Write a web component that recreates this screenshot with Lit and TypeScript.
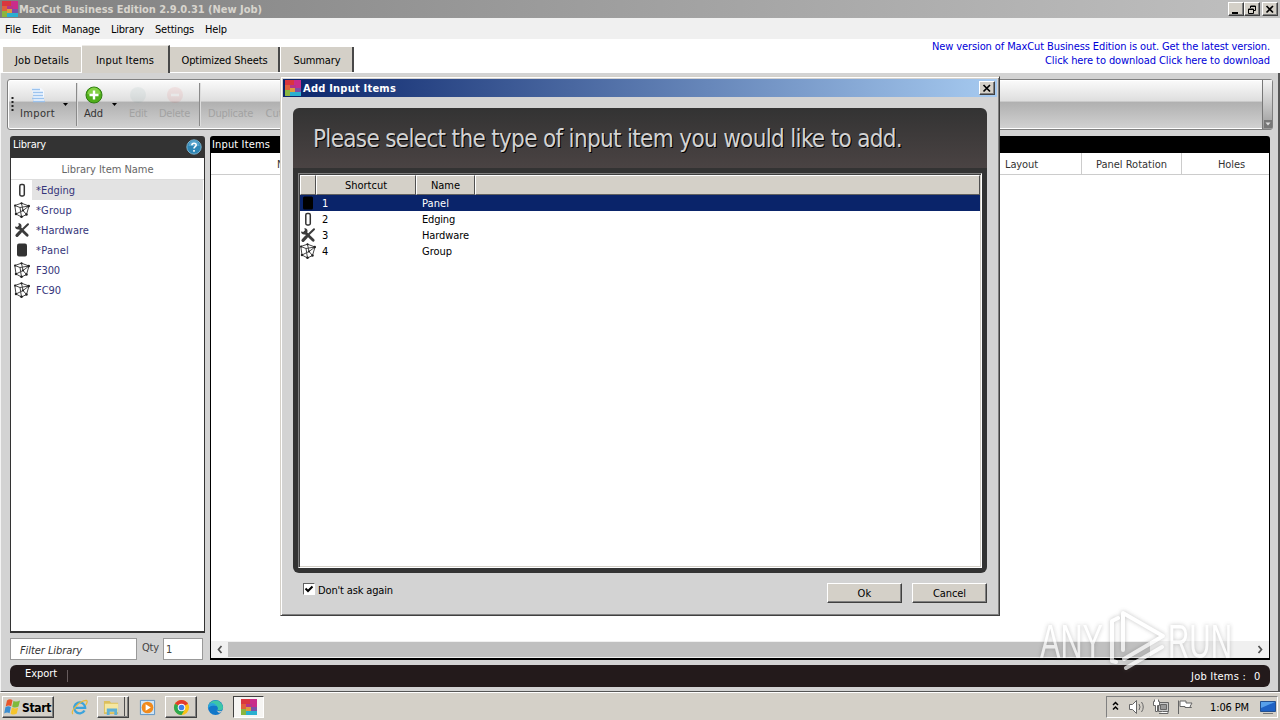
import { LitElement, html, svg, css } from "lit";
import { customElement, property } from "lit/decorators.js";
import { classMap } from "lit/directives/class-map.js";

// Label whose tracking is adjusted so that the run takes `fit` pixels.
@customElement("fit-label")
export class FitLabel extends LitElement {
  @property({ type: String }) text = "";
  @property({ type: Number }) fit = 0;

  static styles = css`
    :host {
      display: inline-block;
      white-space: pre;
      flex: none;
      padding-top: 2px;
    }
  `;

  render() {
    return html`<span>${this.text}</span>`;
  }

  updated() {
    const span = this.renderRoot.querySelector("span") as HTMLElement;
    span.style.letterSpacing = "0";
    const natural = span.getBoundingClientRect().width;
    const gap = (this.fit - natural) / Math.max(1, this.text.length);
    span.style.letterSpacing = `${gap.toFixed(3)}px`;
  }
}

const t = (text: string, fit: number) =>
  html`<fit-label text=${text} fit=${fit}></fit-label>`;

const logo = html`<svg class="logo" viewBox="0 0 16 16">
  <path fill="#d9363f" d="M0 0h9v5H0z" />
  <path fill="#c92c8a" d="M9 0h7v9h-5V5H9z" />
  <path fill="#e0603c" d="M0 5h5v5H0z" />
  <path fill="#8bb53f" d="M0 10h5v6H0z" />
  <path fill="#b4348c" d="M5 5h6v3H5z" />
  <path fill="#e09a3c" d="M5 8h5v4H5z" />
  <path fill="#7b4fa8" d="M10 8h6v4h-6z" />
  <path fill="#2bb0d0" d="M5 12h11v4H5z" />
</svg>`;

const glyphs: Record<string, unknown> = {
  edging: svg`<rect x="5.8" y="2.500" width="4.500" height="11.500" rx="1.400" fill="#fff" stroke="#333" stroke-width="1.500"/>`,
  panel: svg`<rect x="3" y="1.500" width="10" height="13" rx="2" fill="#333"/>`,
  solid: svg`<rect x="3" y="1.500" width="10" height="13" rx="1.500" fill="#000"/>`,
  group: svg`<path d="M0.800 3.500 7.500 1.200 15 4 12.500 12.500 7.500 15 2 12ZM0.800 3.500 6 5.500 15 4M6 5.500 7.500 15M2 12 9 8.500 15 4M9 8.500 12.500 12.500M7.500 1.200 9 8.500" fill="none" stroke="#444" stroke-width="1"/>
    <g fill="#222"><circle cx="1.100" cy="3.500" r="1.100"/><circle cx="7.500" cy="1.300" r="1.100"/><circle cx="14.700" cy="4" r="1.300"/><circle cx="12.500" cy="12.500" r="1.200"/><circle cx="7.500" cy="14.700" r="1.300"/><circle cx="2" cy="12" r="1.200"/><circle cx="9" cy="8.500" r="1"/></g>`,
  hardware: svg`<path d="M5 5.200 13.200 13.200" stroke="#3c3c3c" stroke-width="2.800" stroke-linecap="round"/>
    <path d="M1 4.500 3.500 5 4.900 3.600 4.400 1.100C7 1.200 8.200 3.500 7.200 5.600L5.500 7.200C3.500 8.200 1 6.800 1 4.500Z" fill="#3c3c3c"/>
    <path d="M14 2.200 8.300 7.800" stroke="#3c3c3c" stroke-width="2" stroke-linecap="round"/>
    <path d="M6.500 9.700 3 13.300" stroke="#3c3c3c" stroke-width="3.200" stroke-linecap="round"/>`,
};

const glyph = (name: string) =>
  html`<svg class="glyph" viewBox="0 0 16 16">${glyphs[name]}</svg>`;

const closeMark = html`<svg viewBox="0 0 10 9" width="10" height="9">
  <path d="M1.500 1 8 7.500M8 1 1.500 7.500" stroke="#000" stroke-width="1.700" />
</svg>`;

const arrow = html`<svg class="tri" viewBox="0 0 5 3">
  <path d="M0 0h5L2.500 3z" />
</svg>`;

const menu: [string, number][] = [
  ["File", 16],
  ["Edit", 19],
  ["Manage", 38],
  ["Library", 33],
  ["Settings", 39],
  ["Help", 22],
];

const library: [string, string, number][] = [
  ["edging", "*Edging", 39],
  ["group", "*Group", 36],
  ["hardware", "*Hardware", 53],
  ["panel", "*Panel", 33],
  ["group", "F300", 24],
  ["group", "FC90", 25],
];

const choices: [string, string, string, number][] = [
  ["solid", "1", "Panel", 27],
  ["edging", "2", "Edging", 33],
  ["hardware", "3", "Hardware", 47],
  ["group", "4", "Group", 30],
];

@customElement("app-root")
export class AppRoot extends LitElement {
  static styles = css`
    * {
      box-sizing: border-box;
    }
    :host {
      display: flex;
      flex-direction: column;
      position: relative;
      width: 1280px;
      height: 720px;
      overflow: hidden;
      background: #d3d3d3;
      color: #000;
      font: 11px/14px "DejaVu Sans Condensed", "DejaVu Sans", sans-serif;
    }
    svg {
      display: block;
      flex: none;
    }
    .logo,
    .glyph {
      width: 16px;
      height: 16px;
    }
    .grow {
      flex: 1;
    }

    .titlebar {
      height: 18px;
      flex: none;
      display: flex;
      align-items: center;
      padding: 0 2px;
      gap: 1px;
      background: linear-gradient(90deg, #808080, #c0c0c0);
      color: #d8d5ce;
      font-weight: bold;
    }
    .winbtns {
      display: flex;
    }
    .winbtn {
      width: 16px;
      height: 14px;
      display: flex;
      align-items: center;
      justify-content: center;
      background: #d4d0c8;
      border: 1px solid;
      border-color: #fff #404040 #404040 #fff;
      box-shadow: inset -1px -1px #808080;
    }
    .winbtn.last {
      margin-left: 2px;
    }

    .menubar {
      height: 21px;
      flex: none;
      display: flex;
      align-items: center;
      gap: 11px;
      padding-left: 5px;
      background: #f0f0f0;
    }
    .strip {
      height: 34px;
      flex: none;
      display: flex;
      align-items: flex-end;
      padding: 0 10px 0 3px;
      background: #fff;
    }
    .tab {
      height: 25px;
      margin-bottom: 1px;
      display: flex;
      align-items: center;
      justify-content: center;
      background: #d4d0c8;
      border-right: 2px solid #484848;
    }
    .tab.job {
      width: 78px;
      border-right: 0;
      margin-right: 1px;
    }
    .tab.input {
      width: 88px;
      height: 28px;
      margin-bottom: 0;
      padding-top: 1px;
      border-top: 1px solid #eceae6;
    }
    .tab.sheets {
      width: 110px;
      padding-left: 1px;
      margin-right: 1px;
    }
    .tab.summary {
      width: 73px;
      padding-left: 1px;
    }
    .notice {
      height: 34px;
      display: flex;
      flex-direction: column;
      align-items: flex-end;
      color: #0000d8;
      line-height: 12px;
    }

    .workspace {
      height: 619px;
      flex: none;
      display: flex;
      flex-direction: column;
      padding: 6px 5px 3px 6px;
      border-right: 2px solid #555;
      border-bottom: 1px solid #555;
      border-left: 1px solid #f4f4f4;
    }
    .toolbar {
      height: 51px;
      flex: none;
      display: flex;
      border: 1px solid #808080;
      border-radius: 3px;
      box-shadow: inset 0 0 0 1px #fff;
      background: linear-gradient(#fbfbfb, #dedede 43%, #b0b0b0 45%, #d2d2d2);
      color: #333;
    }
    .tool {
      display: flex;
      flex-direction: column;
      align-items: center;
      padding-top: 6px;
      gap: 1px;
      height: 49px;
    }
    .tool svg,
    .tool .blank {
      width: 18px;
      height: 18px;
    }
    .tool.off {
      color: #a2a2a2;
    }
    .tool.off svg {
      opacity: 0.08;
    }
    .tool.delete {
      margin: 0 9px 0 12px;
    }
    .tool.duplicate {
      margin: 0 12px 0 7px;
    }
    .grip {
      width: 12px;
      padding: 16px 0 0 3px;
    }
    .tri {
      width: 5px;
      height: 3px;
      margin: 23px 8px 0;
    }
    .tool.add {
      margin-left: 6px;
    }
    .tool.add + .tri {
      margin: 23px 12px 0 9px;
    }
    .rule {
      width: 2px;
      height: 43px;
      margin-top: 3px;
      border-left: 1px solid #8a8a8a;
      border-right: 1px solid #ddd;
    }
    .end {
      width: 10px;
      height: 49px;
      display: flex;
      align-items: flex-end;
      justify-content: center;
      padding-bottom: 1px;
      border-left: 1px solid #777;
      background: linear-gradient(#f4f4f4, #999);
    }
    .end svg {
      width: 8px;
      height: 8px;
    }

    .panes {
      display: flex;
      gap: 5px;
      height: 524px;
      flex: none;
      margin: 6px 3px 0;
    }
    .side {
      width: 195px;
      display: flex;
      flex-direction: column;
    }
    .library {
      height: 497px;
      background: #fff;
      border: 1px solid #333;
      border-bottom-width: 2px;
      border-radius: 3px 3px 0 0;
    }
    .library .head {
      height: 21px;
      display: flex;
      justify-content: space-between;
      padding: 0 2px;
      background: #333;
      color: #fff;
      line-height: 12px;
    }
    .help {
      width: 16px;
      height: 16px;
      margin-top: 2px;
    }
    .library .colhead {
      height: 22px;
      display: flex;
      align-items: center;
      justify-content: center;
      border-bottom: 1px solid #ddd;
      color: #666;
    }
    .item {
      height: 20px;
      display: flex;
      align-items: center;
      padding-left: 3px;
      gap: 2px;
      color: #35357a;
    }
    .item .name {
      flex: 1;
      height: 20px;
      display: flex;
      align-items: center;
      padding-left: 4px;
      margin-right: 1px;
    }
    .item .name.on {
      background: #e3e3e3;
    }
    .filter {
      display: flex;
      height: 22px;
      margin-top: 5px;
      color: #444;
    }
    .box {
      height: 22px;
      display: flex;
      align-items: center;
      border: 1px solid #999;
      background: #fff;
      padding-left: 2px;
    }
    .box.search {
      width: 127px;
      padding: 1px 0 0 9px;
      font-style: italic;
      color: #333;
    }
    .box.qty {
      width: 40px;
      margin-left: 4px;
    }
    .qtylabel {
      width: 17px;
      margin-left: 5px;
      padding-top: 1px;
    }

    .grid {
      flex: 1;
      display: flex;
      flex-direction: column;
      background: #fff;
      border: 1px solid #000;
      border-bottom-width: 2px;
      border-radius: 3px 3px 0 0;
    }
    .grid .head {
      height: 16px;
      padding: 0 1px;
      background: #000;
      color: #fff;
      line-height: 12px;
    }
    .cols {
      height: 22px;
      display: flex;
      border-bottom: 1px solid #ccc;
      color: #333;
    }
    .col {
      display: flex;
      align-items: center;
      justify-content: center;
      border-right: 1px solid #ccc;
    }
    .col.name {
      width: 750px;
      justify-content: flex-start;
      padding-left: 66px;
      border: 0;
    }
    .col.layout {
      width: 121px;
      padding-left: 1px;
    }
    .col.rotation {
      width: 100px;
    }
    .col.holes {
      flex: 1;
      padding-left: 12px;
      border: 0;
    }
    .scroll {
      height: 17px;
      display: flex;
      align-items: center;
      background: #f0f0f0;
    }
    .scroll svg {
      width: 17px;
      height: 17px;
    }
    .thumb {
      width: 922px;
      height: 15px;
      margin-right: auto;
      background: #c0c0c0;
    }
    .status {
      height: 22px;
      flex: none;
      margin: 5px 3px 0;
      display: flex;
      padding: 0 10px 0 15px;
      border-radius: 6px;
      background: #231a1b;
      color: #fff;
    }
    .status .pipe {
      width: 1px;
      height: 12px;
      margin: 5px 0 0 10px;
      background: #665c5d;
    }
    .status .count {
      display: flex;
      gap: 8px;
      padding-top: 3px;
    }

    .taskbar {
      height: 28px;
      flex: none;
      display: flex;
      padding: 3px 2px 2px;
      border-top: 1px solid #fff;
      background: #d4d0c8;
    }
    .start {
      width: 52px;
      height: 22px;
      display: flex;
      align-items: center;
      gap: 1px;
      padding: 0 0 1px 1px;
      border: 1px solid;
      border-color: #fff #404040 #404040 #fff;
      box-shadow: inset -1px -1px #808080;
      font-size: 12px;
      font-weight: bold;
    }
    .slot {
      width: 32px;
      height: 22px;
      display: flex;
      align-items: center;
      justify-content: center;
      border: 1px solid transparent;
    }
    .slot svg {
      width: 17px;
      height: 17px;
    }
    .slot.up {
      border-color: #fff #404040 #404040 #fff;
      box-shadow: inset -1px -1px #808080;
    }
    .slot.stack {
      padding-right: 4px;
      box-shadow: inset -1px -1px #808080, inset -3px 0 #d4d0c8,
        inset -4px 0 #505050;
    }
    .slot.down {
      width: 31px;
      border-color: #404040 #fff #fff #404040;
      background: #f6f5f3;
    }
    .slot.down svg {
      width: 16px;
      height: 16px;
    }
    .quick {
      display: flex;
      margin-left: 9px;
      gap: 2px;
    }
    .tray {
      width: 172px;
      height: 22px;
      display: flex;
      align-items: center;
      padding-left: 4px;
      border: 1px solid;
      border-color: #808080 #fff #fff #808080;
    }
    .tray .time {
      margin: 0 10px 0 15px;
    }

    .dialog {
      position: absolute;
      left: 280px;
      top: 76px;
      width: 720px;
      height: 540px;
      display: flex;
      flex-direction: column;
      padding: 1px;
      border: 1px solid;
      border-color: #d4d0c8 #404040 #404040 #d4d0c8;
      box-shadow: inset 1px 1px #fff, inset -1px -1px #808080;
      background: #d3d3d3;
    }
    .caption {
      height: 18px;
      margin: 1px 1px 0;
      flex: none;
      display: flex;
      align-items: center;
      gap: 2px;
      padding: 0 2px;
      background: linear-gradient(90deg, #0a246a, #a6caf0);
      color: #fff;
      font-weight: bold;
    }
    .frame {
      height: 465px;
      margin: 11px 11px 0;
      padding: 0 5px 5px;
      flex: none;
      display: flex;
      flex-direction: column;
      border-radius: 6px;
      background: linear-gradient(#333, #4a4343 60px, #333 60px);
    }
    .prompt {
      height: 65px;
      flex: none;
      padding: 14px 15px;
      color: #d3d3d3;
      font-size: 24px;
      line-height: 30px;
      text-shadow: 1px 1px #000;
    }
    .list {
      flex: 1;
      border: 1px solid;
      border-color: #808080 #fff #fff #808080;
      box-shadow: inset 1px 1px #404040, inset -1px -1px #d4d0c8;
      padding: 1px;
      background: #fff;
    }
    .heads {
      height: 20px;
      display: flex;
    }
    .heads div {
      height: 20px;
      display: flex;
      align-items: center;
      justify-content: center;
      background: #d4d0c8;
      border: 1px solid;
      border-color: #fff #505050 #606060 #fff;
    }
    .heads .h1 {
      width: 16px;
    }
    .heads .h2 {
      width: 100px;
    }
    .heads .h3 {
      width: 59px;
    }
    .heads .h4 {
      flex: 1;
    }
    .choice {
      height: 16px;
      display: flex;
      align-items: center;
    }
    .choice.on {
      background: #0a246a;
      color: #fff;
    }
    .choice .key {
      width: 100px;
      margin-left: 6px;
    }
    .actions {
      display: flex;
      padding: 10px 11px 0 21px;
      gap: 10px;
    }
    .check {
      display: flex;
      flex: 1;
      gap: 3px;
      margin-top: -1px;
    }
    .tick {
      width: 12px;
      height: 12px;
      margin-top: 1px;
      border: 1px solid;
      border-color: #606060 #fff #fff #606060;
      background: #fff;
    }
    .push {
      width: 75px;
      height: 20px;
      display: flex;
      align-items: center;
      justify-content: center;
      background: #d4d0c8;
      border: 1px solid;
      border-color: #fff #404040 #404040 #fff;
      box-shadow: inset -1px -1px #808080;
    }

    .watermark {
      position: absolute;
      left: 1030px;
      top: 590px;
      overflow: visible;
      filter: drop-shadow(0 0 2px rgba(90, 90, 90, 0.5));
      opacity: 0.7;
      font-family: "Liberation Sans", sans-serif;
    }
  `;

  private windowBar() {
    return html`<div class="titlebar">
      ${logo}${t("MaxCut Business Edition 2.9.0.31 (New Job)", 243)}
      <span class="grow"></span>
      <div class="winbtns">
        <div class="winbtn">
          <svg viewBox="0 0 10 9" width="10" height="9"><path d="M1 7h6v2H1z" /></svg>
        </div>
        <div class="winbtn">
          <svg viewBox="0 0 10 9" width="10" height="9">
            <path d="M3.500 3V1h5v4.500H7M3.500 1.500h5M1.500 4h5v4.500h-5zM1.500 4.500h5" fill="none" stroke="#000" />
          </svg>
        </div>
        <div class="winbtn last">${closeMark}</div>
      </div>
    </div>`;
  }

  private toolbar() {
    return html`<div class="toolbar">
      <div class="grip">
        <svg width="3" height="16">
          <path d="M1.500 1v15" stroke="#222" stroke-width="2" stroke-dasharray="2 2" />
        </svg>
      </div>
      <div class="tool">
        <svg viewBox="0 0 18 18">
          <path d="M3 2h9l3 3v11H5z" fill="#f3f8ff" />
          <path d="M3 3.500h8M4 6.500h10M4 9.500h10M3 12.500h12M4 15.500h12" stroke="#9cc3ee" stroke-width="1.300" />
        </svg>
        ${t("Import", 35)}
      </div>
      ${arrow}
      <div class="rule"></div>
      <div class="tool add">
        <svg viewBox="0 0 18 18">
          <circle cx="9" cy="9" r="8" fill="#4fae1a" stroke="#2f7d12" />
          <path d="M2.500 8a6.500 6.500 0 0 1 13 0q-6.500 2-13 0z" fill="#9ade55" opacity="0.700" />
          <path d="M9 4.500v9M4.500 9h9" stroke="#fff" stroke-width="2.400" />
        </svg>
        ${t("Add", 19)}
      </div>
      ${arrow}
      <div class="tool off edit">
        <svg viewBox="0 0 18 18"><circle cx="9" cy="9" r="8" fill="#5a8a8a" /></svg>
        ${t("Edit", 18)}
      </div>
      <div class="tool off delete">
        <svg viewBox="0 0 18 18">
          <circle cx="9" cy="9" r="8" fill="#d33" />
          <path d="M5 9h8" stroke="#fff" stroke-width="2.500" />
        </svg>
        ${t("Delete", 31)}
      </div>
      <div class="rule"></div>
      <div class="tool off duplicate">
        <span class="blank"></span>${t("Duplicate", 45)}
      </div>
      <div class="tool off"><span class="blank"></span>${t("Cut", 17)}</div>
      <span class="grow"></span>
      <div class="end">
        <svg viewBox="0 0 8 8">
          <path d="M0 0h8v8H0z" fill="#777" />
          <path d="M1.500 2.500h5L4 5.500z" fill="#ddd" />
        </svg>
      </div>
    </div>`;
  }

  private side() {
    return html`<div class="side">
      <div class="library">
        <div class="head">
          ${t("Library", 33)}
          <svg class="help" viewBox="0 0 16 16">
            <circle cx="8" cy="8" r="7.200" fill="#2f86b5" stroke="#8ec6e2" stroke-width="0.800" />
            <path d="M2.500 7a5.500 5.500 0 0 1 11 0z" fill="#69b0d6" opacity="0.700" />
            <path d="M5.900 6.200C5.900 3.600 10.200 3.700 10.200 6.100 10.200 7.800 8 7.700 8 9.600M8 11v1.700" fill="none" stroke="#fff" stroke-width="1.600" />
          </svg>
        </div>
        <div class="colhead">${t("Library Item Name", 92)}</div>
        ${library.map(
          ([icon, name, w], i) => html`<div class="item">
            ${glyph(icon)}
            <div class=${classMap({ name: true, on: i === 0 })}>${t(name, w)}</div>
          </div>`
        )}
      </div>
      <div class="filter">
        <div class="box search">${t("Filter Library", 62)}</div>
        <div class="qtylabel">${t("Qty", 17)}</div>
        <div class="box qty">${t("1", 6)}</div>
      </div>
    </div>`;
  }

  private grid() {
    return html`<div class="grid">
      <div class="head">${t("Input Items", 58)}</div>
      <div class="cols">
        <div class="col name">${t("Name", 28)}</div>
        <div class="col layout">${t("Layout", 33)}</div>
        <div class="col rotation">${t("Panel Rotation", 71)}</div>
        <div class="col holes">${t("Holes", 27)}</div>
      </div>
      <div class="grow"></div>
      <div class="scroll">
        <svg viewBox="0 0 17 17">
          <path d="M10.500 5 7.500 8.500 10.500 12" fill="none" stroke="#505050" stroke-width="1.700" />
        </svg>
        <div class="thumb"></div>
        <svg viewBox="0 0 17 17">
          <path d="M6.500 5 9.500 8.500 6.500 12" fill="none" stroke="#505050" stroke-width="1.700" />
        </svg>
      </div>
    </div>`;
  }

  private taskbar() {
    return html`<div class="taskbar">
      <div class="start">
        <svg viewBox="0 0 17 17" width="17" height="17">
          <path d="M3 2.500Q6 0 8.500 2.200L7.200 8.200Q4.500 6.500 1.700 8.500z" fill="#e8562a" />
          <path d="M9.500 2.700Q12.500 4.500 16 2.500L14.500 8.500Q11.500 10.500 8.200 8.700z" fill="#7fba3c" />
          <path d="M1.400 9.300Q4.200 7.400 6.900 9.100L5.600 15.200Q3 13.500.2 15.500z" fill="#3c8ed0" />
          <path d="M7.900 9.600Q11 11.300 14.200 9.400L12.800 15.600Q9.500 17.500 6.600 15.700z" fill="#f6c52c" />
        </svg>
        ${t("Start", 29)}
      </div>
      <div class="quick">
        <div class="slot">
          <svg viewBox="0 0 18 18">
            <path d="M14.300 12.200A5.800 5.800 0 1 1 15 9.400H5" fill="none" stroke="#3ba3dc" stroke-width="2.500" />
            <path d="M2 16C-1 13 9 2 16 1.500c2 .3 1 3-.5 5" fill="none" stroke="#e9b93a" stroke-width="1.300" />
          </svg>
        </div>
        <div class="slot up stack">
          <svg viewBox="0 0 18 18">
            <path d="M1 2h6l1.500 2H16v12H1z" fill="#dcbf5c" />
            <path d="M2 5h14v9H2z" fill="#f5e7a0" />
            <path d="M4 17v-7h11v7h-3v-3.500H7V17z" fill="#5fb0d6" />
          </svg>
        </div>
        <div class="slot">
          <svg viewBox="0 0 18 18">
            <path d="M1.500 1.500h15v15h-15z" fill="#cfe4f5" stroke="#5b93c4" />
            <circle cx="9" cy="9" r="6.200" fill="#f08a1d" />
            <path d="M7 5.500 12.500 9 7 12.500z" fill="#fff" />
          </svg>
        </div>
        <div class="slot up">
          <svg viewBox="0 0 18 18">
            <circle cx="9" cy="9" r="8" fill="#fbc116" />
            <path d="M9 9 2.100 5A8 8 0 0 1 15.900 5z" fill="#e33b2e" />
            <path d="M9 9 2.100 5A8 8 0 0 0 9 17l3.500-6z" fill="#2da94f" />
            <circle cx="9" cy="9" r="4" fill="#fff" />
            <circle cx="9" cy="9" r="3" fill="#3f7fe8" />
          </svg>
        </div>
        <div class="slot">
          <svg viewBox="0 0 18 18">
            <circle cx="9" cy="9" r="8" fill="#1277c9" />
            <path d="M1.200 8A8 8 0 0 1 17 9c0 3-4 4-6 2.500 1.500-2 0-5-3.500-5S2 7 1.200 8z" fill="#3cc6a8" />
            <path d="M1.200 8C3 2 9 4 10.500 7.500 7 6 3 7 1.200 10z" fill="#2aa4dd" />
            <path d="M10 12q3 1.800 6.500.2-2 3-4.500 2.200z" fill="#d4d0c8" />
          </svg>
        </div>
        <div class="slot down">${logo}</div>
      </div>
      <span class="grow"></span>
      <div class="tray">
        <svg viewBox="0 0 10 14" width="10" height="14">
          <path d="M2 5 4.500 2.500 7 5M2 9.500 4.500 7 7 9.500" fill="none" stroke="#000" stroke-width="1.500" />
        </svg>
        <svg viewBox="0 0 74 18" width="74" height="18">
          <g fill="#fff" stroke="#666">
            <path d="M8.500 6.500h3l4-4v13l-4-4h-3z" />
            <path d="M18 6q2 3 0 6M20.500 4q3.500 5 0 10" fill="none" />
            <path d="M37.500 4.500h10v9h-10z" fill="#c8c8c8" />
            <path d="M39.500 6.500h6v5h-6z" fill="#999" />
            <path d="M38 15.500h9v-2h-5" />
            <path d="M33.500 1.500v2h-1v4h2v6h2v-6h2v-4h-1v-2" />
            <path d="M57.500 16V2.500M59 3h6v2h6l-2 3.500 1.500 1H64v-1h-5z" />
          </g>
        </svg>
        <div class="time">${t("1:06 PM", 39)}</div>
        <svg viewBox="0 0 18 16" width="18" height="16">
          <path d="M1.500 2.500h15v10h-15z" fill="#1f62c4" stroke="#24508f" />
          <path d="M2 3h14L2 9z" fill="#58a0ea" />
          <path d="M4 14.500h10" stroke="#777" />
        </svg>
      </div>
    </div>`;
  }

  private dialog() {
    return html`<div class="dialog">
      <div class="caption">
        ${logo}${t("Add Input Items", 93)}
        <span class="grow"></span>
        <div class="winbtn">${closeMark}</div>
      </div>
      <div class="frame">
        <div class="prompt">
          ${t("Please select the type of input item you would like to add.", 589)}
        </div>
        <div class="list">
          <div class="heads">
            <div class="h1"></div>
            <div class="h2">${t("Shortcut", 42)}</div>
            <div class="h3">${t("Name", 29)}</div>
            <div class="h4"></div>
          </div>
          ${choices.map(
            ([icon, key, name, w], i) => html`<div class=${classMap({ choice: true, on: i === 0 })}>
              ${glyph(icon)}
              <span class="key">${t(key, 6)}</span>${t(name, w)}
            </div>`
          )}
        </div>
      </div>
      <div class="actions">
        <div class="check">
          <div class="tick">
            <svg viewBox="0 0 10 10" width="10" height="10">
              <path d="M1.500 4.500 4 7 8.500 2.500" fill="none" stroke="#000" stroke-width="2" />
            </svg>
          </div>
          ${t("Don't ask again", 75)}
        </div>
        <div class="push">${t("Ok", 14)}</div>
        <div class="push">${t("Cancel", 33)}</div>
      </div>
    </div>`;
  }

  render() {
    return html`${this.windowBar()}
      <div class="menubar">${menu.map(([m, w]) => t(m, w))}</div>
      <div class="strip">
        <div class="tab job">${t("Job Details", 54)}</div>
        <div class="tab input">${t("Input Items", 58)}</div>
        <div class="tab sheets">${t("Optimized Sheets", 86)}</div>
        <div class="tab summary">${t("Summary", 47)}</div>
        <span class="grow"></span>
        <div class="notice">
          ${t("New version of MaxCut Business Edition is out. Get the latest version.", 338)}
          ${t("Click here to download Click here to download", 225)}
        </div>
      </div>
      <div class="workspace">
        ${this.toolbar()}
        <div class="panes">${this.side()}${this.grid()}</div>
        <div class="status">
          ${t("Export", 32)}
          <div class="pipe"></div>
          <span class="grow"></span>
          <div class="count">${t("Job Items :", 55)}${t("0", 6)}</div>
        </div>
      </div>
      ${this.taskbar()} ${this.dialog()}
      <svg class="watermark" viewBox="0 0 250 100" width="250" height="100">
        <g fill="#fff" font-size="49">
          <text x="10" y="68" textLength="63" lengthAdjust="spacingAndGlyphs">ANY</text>
          <text x="138" y="68" textLength="64" lengthAdjust="spacingAndGlyphs">RUN</text>
        </g>
        <g fill="none" stroke="#fff" stroke-width="4" stroke-linejoin="round" stroke-linecap="round">
          <path d="M93 60V23L133 46 94 69" />
          <path d="M88 28 82 31V71L86 72M96 78 132 57" />
        </g>
      </svg>`;
  }
}
